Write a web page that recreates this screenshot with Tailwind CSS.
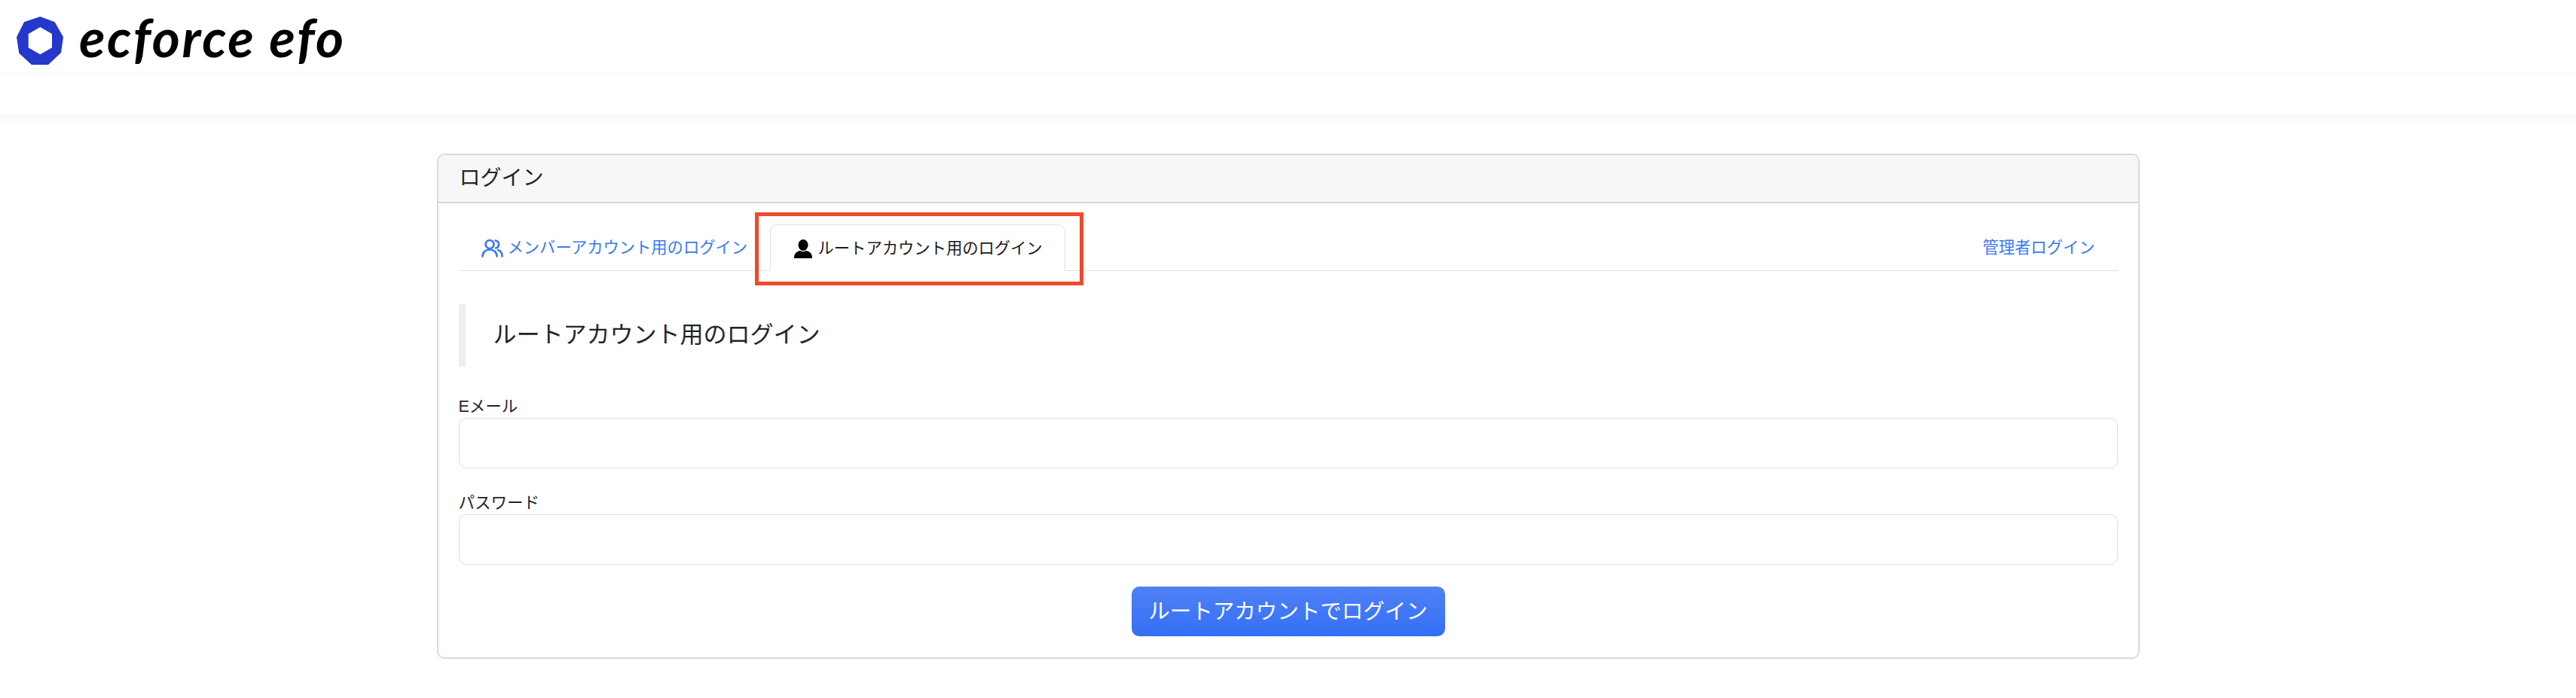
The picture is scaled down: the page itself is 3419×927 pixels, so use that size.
<!DOCTYPE html>
<html lang="ja">
<head>
    <meta charset="UTF-8">
    <title>ecforce efo ログイン</title>
    <script src="https://cdn.jsdelivr.net/npm/@tailwindcss/browser@4"></script>
</head>
<body class="bg-white text-[#212529] font-['Liberation_Sans','Noto_Sans_CJK_JP',sans-serif]">
    <!-- Header -->
    <header class="h-[153px] bg-white shadow-[0_4px_14px_rgba(0,0,0,0.05)]">
        <div class="h-[98px] border-b border-[#f6f6f6] flex items-start pl-[22px] pt-[22px]">
            <svg class="w-[64px] h-[65px] shrink-0" viewBox="22 22 64 65">
                <path fill="#2438cc" fill-rule="evenodd" d="M53.3 22 72.7 29.3 84 49.3 81 70 64 86H42L25.3 70.7 22 49.3 32 29.3ZM53.3 36 37.7 45V63.3L53.3 72.3 69 63.3V45Z"/>
            </svg>
            <span class="ml-[19px] -mt-[13px] text-[71px] leading-[80px] tracking-[2.5px] italic font-bold text-black font-['Lato',sans-serif] whitespace-nowrap">ecforce efo</span>
        </div>
    </header>

    <main class="pt-[51px]">
        <section class="w-[2260px] mx-auto h-[671px] border-2 border-[#dadada] rounded-[10px] overflow-hidden">
            <h2 class="h-[64px] px-[28px] flex items-center bg-[#f7f7f7] border-b-2 border-[#d6d6d6] text-[28px] font-normal">ログイン</h2>

            <div class="px-[27px]">
                <!-- Tabs -->
                <nav class="mt-[28px] h-[62px] flex border-b border-[#e2e2e2] text-[21.3px]">
                    <a class="h-[61px] w-[411px] pl-[30px] pt-[2px] flex items-center whitespace-nowrap text-[#3b78f0]">
                        <svg class="w-[29px] h-[25px] mr-[6px]" viewBox="0 0 29 25" fill="none" stroke="#3b78f0" stroke-width="2.6" stroke-linecap="round">
                            <circle cx="11" cy="7.5" r="5.5"/>
                            <path d="M1.5 23.5c0-5.5 4-9 9.5-9s9.5 3.5 9.5 9"/>
                            <path d="M18.5 2.5c3 .5 4.5 2.5 4.5 5s-1.5 4.5-4 5"/>
                            <path d="M22 15c3.5 1 5.5 4 5.5 8.5"/>
                        </svg>
                        メンバーアカウント用のログイン
                    </a>
                    <a class="relative ml-[2px] h-[62px] w-[392px] pl-[31px] pt-[2px] flex items-center bg-white border border-b-0 border-[#e2e2e2] rounded-t-[10px] whitespace-nowrap text-[#1a1a1a]">
                        <svg class="w-[24px] h-[25px] mr-[8px]" viewBox="0 0 24 25" fill="#000">
                            <ellipse cx="12" cy="7.5" rx="6.5" ry="7.5"/>
                            <path d="M0 25c0-6 2.5-8.5 8-10 2.5 1.5 5.5 1.5 8 0 5.5 1.5 8 4 8 10Z"/>
                        </svg>
                        ルートアカウント用のログイン
                        <!-- Red annotation around the tab -->
                        <span class="absolute -left-[21px] -top-[17px] w-[436px] h-[97px] border-[5px] border-[#ee4a2c]"></span>
                    </a>
                    <a class="ml-auto h-[61px] px-[30px] pt-[2px] flex items-center text-[#3b78f0]">管理者ログイン</a>
                </nav>

                <h3 class="mt-[44px] h-[83px] pl-[37px] flex items-center border-l-[9px] border-[#eeeeee] text-[31px] font-normal">ルートアカウント用のログイン</h3>

                <form>
                    <label class="mt-[38px] block h-[30px] text-[21.5px] leading-[30px]">Eメール</label>
                    <input type="email" class="block w-full h-[67px] border border-[#dedede] rounded-[10px] bg-white">
                    <label class="mt-[31px] block h-[30px] text-[21.5px] leading-[30px]">パスワード</label>
                    <input type="password" class="block w-full h-[67px] border border-[#dedede] rounded-[10px] bg-white">
                    <div class="mt-[29px] flex justify-center">
                        <button type="button" class="w-[416px] h-[66px] rounded-[10px] bg-linear-to-b from-[#5081f6] to-[#336ff5] text-white text-[28.5px] whitespace-nowrap">ルートアカウントでログイン</button>
                    </div>
                </form>
            </div>
        </section>
    </main>
</body>
</html>
